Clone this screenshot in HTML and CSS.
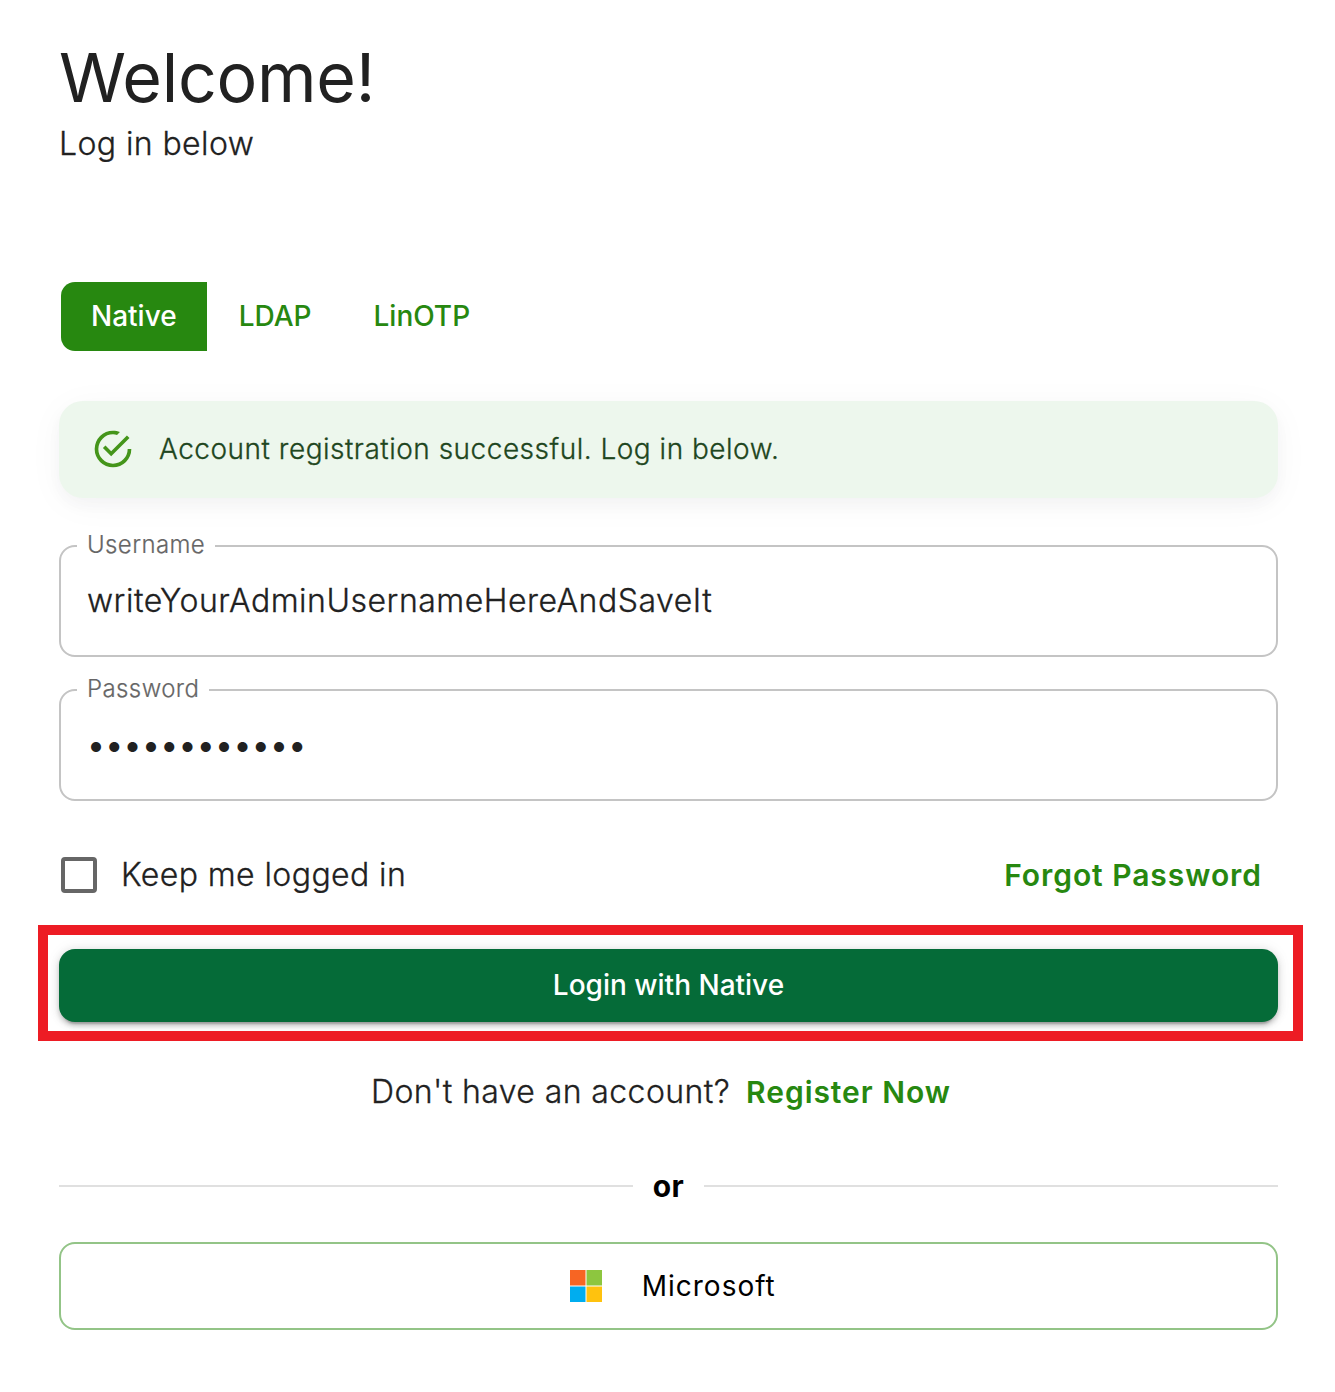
FILE: index.html
```html
<!DOCTYPE html>
<html lang="en">
<head>
<meta charset="utf-8">
<title>Log in</title>
<link rel="stylesheet" href="styles.css">
</head>
<body>
<main class="login">
  <h1 class="title"><span>Welcome!</span></h1>
  <p class="subtitle light"><span>Log in below</span></p>
  <nav class="tabs">
    <button class="tab tab-active"><span>Native</span></button>
    <button class="tab"><span>LDAP</span></button>
    <button class="tab"><span>LinOTP</span></button>
  </nav>
  <div class="alert">
    <svg class="alert-icon" viewBox="0 0 24 24"><path d="M20,12A8,8 0 0,1 12,20A8,8 0 0,1 4,12A8,8 0 0,1 12,4C12.76,4 13.5,4.11 14.2,4.31L15.77,2.74C14.61,2.26 13.34,2 12,2A10,10 0 0,0 2,12A10,10 0 0,0 12,22A10,10 0 0,0 22,12M7.91,10.08L6.5,11.5L11,16L21,6L19.59,4.58L11,13.17L7.91,10.08Z"/></svg>
    <span class="light">Account registration successful. Log in below.</span>
  </div>
  <fieldset class="field">
    <legend class="label"><span>Username</span></legend>
    <div class="value light"><span>writeYourAdminUsernameHereAndSaveIt</span></div>
  </fieldset>
  <fieldset class="field field-password">
    <legend class="label"><span>Password</span></legend>
    <div class="value dots"><span>••••••••••••</span></div>
  </fieldset>
  <div class="options">
    <label class="remember light"><i class="checkbox"></i><span>Keep me logged in</span></label>
    <a class="link"><span>Forgot Password</span></a>
  </div>
  <div class="highlight">
    <button class="submit"><span>Login with Native</span></button>
  </div>
  <p class="register"><span class="light">Don't have an account?</span><a class="link"><span>Register Now</span></a></p>
  <div class="divider"><span>or</span></div>
  <button class="provider">
    <svg class="ms" viewBox="0 0 32 32"><path fill="#f76523" d="M0 0h15.5v15.5H0z"/><path fill="#8dc63f" d="M16.5 0H32v15.5H16.5z"/><path fill="#00adef" d="M0 16.5h15.5V32H0z"/><path fill="#ffc20e" d="M16.5 16.5H32V32H16.5z"/></svg>
    <span>Microsoft</span>
  </button>
</main>
</body>
</html>
```
FILE: styles.css
```css
* { box-sizing: border-box; }
body { margin: 0; background: #fff; color: #212121; font: 300 32px/48px Inter, "Liberation Sans", sans-serif; letter-spacing: 0.4px; }
button { font: inherit; border: 0; background: none; padding: 0; }
h1, p, fieldset { margin: 0; }
.light { -webkit-text-stroke: 0.3px currentColor; }
.login { display: flex; flex-direction: column; padding: 35px 57px 0 59px; }
.title { font-size: 68px; line-height: 84px; font-weight: 400; letter-spacing: -0.25px; }
.subtitle { margin-top: 1px; }
.tabs { display: flex; margin: 114px 0 0 2px; height: 69px; }
.tab { padding: 0 30px 2px 32px; color: #278810; font-size: 28px; font-weight: 500; letter-spacing: 0; }
.tab-active { padding: 0 30px 2px; background: #278810; color: #fff; border-radius: 14px 0 0 14px; }
.alert { display: flex; align-items: center; gap: 24px; height: 97px; margin-top: 50px; padding: 0 32px 1px; border-radius: 24px; background: #edf7ed; color: #1e4620; font-size: 28px; letter-spacing: 0.5px; box-shadow: 0 7px 14px rgba(50, 50, 93, 0.03), 0 6px 36px rgba(0, 0, 0, 0.04); }
.alert-icon { width: 44px; height: 44px; fill: #44951a; }
.field { height: 123px; margin-top: 36px; padding: 0 26px 0 16px; border: 2px solid #c4c4c4; border-radius: 16px; }
.field-password { margin-top: 21px; }
.label { height: 24px; padding: 0 10px; color: #666; font-size: 24px; line-height: 22px; letter-spacing: 0.4px; -webkit-text-stroke: 0.2px currentColor; }
.value { padding: 19px 10px 0; letter-spacing: 0.51px; }
.dots { padding-top: 19px; font-weight: 400; letter-spacing: 0.3px; }
.options { display: flex; justify-content: space-between; align-items: center; margin-top: 50px; padding: 0 16px 0 2px; }
.remember { display: flex; align-items: center; gap: 24px; }
.checkbox { width: 36px; height: 36px; border: 4px solid #666; border-radius: 4px; }
.link { color: #278810; font-size: 30px; font-weight: 600; letter-spacing: 0.95px; }
.highlight { margin: 26px -25px 0 -21px; height: 116px; border: 10px solid #ed1c24; padding: 14px 15px 9px 11px; overflow: hidden; }
.submit { display: block; width: 100%; height: 73px; padding-bottom: 2px; border-radius: 16px; background: #056b38; color: #fff; font-size: 28px; font-weight: 500; letter-spacing: 0; box-shadow: 0 6px 2px -4px rgba(0,0,0,.2), 0 4px 4px rgba(0,0,0,.14), 0 2px 10px rgba(0,0,0,.12), 0 0 16px rgba(0,0,0,.06); }
.register { display: flex; gap: 16px; margin: 27px 0 0 312px; }
.divider { display: flex; align-items: center; gap: 20px; margin-top: 46px; color: #000; font-size: 30px; font-weight: 700; letter-spacing: 0.5px; }
.divider::before, .divider::after { content: ""; flex: 1; height: 2px; background: #e0e0e0; }
.provider { display: flex; align-items: center; justify-content: center; gap: 39.5px; margin-top: 32px; height: 88px; padding-left: 9px; border: 2px solid #93c487; border-radius: 16px; color: #000; font-size: 28px; font-weight: 400; letter-spacing: 1px; }
.ms { width: 32px; height: 32px; }
```
